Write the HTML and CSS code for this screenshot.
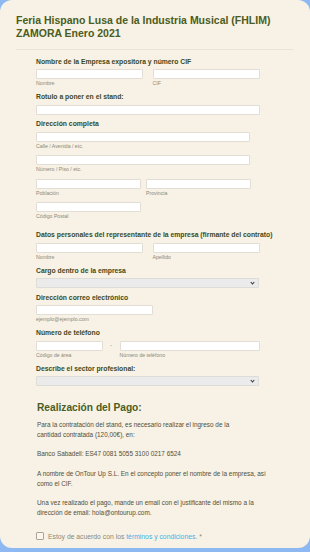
FILE: index.html
```html
<!DOCTYPE html>
<html lang="es">
<head>
    <meta charset="UTF-8">
    <meta name="viewport" content="width=device-width, initial-scale=1.0">
    <title>Feria Hispano Lusa de la Industria Musical</title>
    <link rel="stylesheet" href="styles.css">
</head>
<body>

<div class="card">
    <h1>Feria Hispano Lusa de la Industria Musical (FHLIM) ZAMORA Enero 2021</h1>
    <hr class="divider">

    <div class="form">
        <div class="field">
            <label>Nombre de la Empresa expositora y número CIF</label>
            <div class="row">
                <div class="sub"><input type="text" class="half"><span>Nombre</span></div>
                <div class="sub"><input type="text" class="half"><span>CIF</span></div>
            </div>
        </div>

        <div class="field">
            <label>Rotulo a poner en el stand:</label>
            <input type="text" class="full">
        </div>

        <div class="field">
            <label>Dirección completa</label>
            <div class="sub"><input type="text" class="addr"><span>Calle / Avenida / etc.</span></div>
            <div class="sub"><input type="text" class="addr"><span>Número / Piso / etc.</span></div>
            <div class="row tight">
                <div class="sub"><input type="text" class="quarter"><span>Población</span></div>
                <div class="sub"><input type="text" class="quarter"><span>Provincia</span></div>
            </div>
            <div class="sub"><input type="text" class="quarter"><span>Código Postal</span></div>
        </div>

        <div class="field spaced">
            <label>Datos personales del representante de la empresa (firmante del contrato)</label>
            <div class="row">
                <div class="sub"><input type="text" class="half"><span>Nombre</span></div>
                <div class="sub"><input type="text" class="half"><span>Apellido</span></div>
            </div>
        </div>

        <div class="field">
            <label>Cargo dentro de la empresa</label>
            <div class="select"><select><option></option></select></div>
        </div>

        <div class="field">
            <label>Dirección correo electrónico</label>
            <div class="sub"><input type="text" class="email"><span>ejemplo@ejemplo.com</span></div>
        </div>

        <div class="field">
            <label>Número de teléfono</label>
            <div class="row phone">
                <div class="sub"><input type="text" class="area"><span>Código de área</span></div>
                <div class="dash">-</div>
                <div class="sub"><input type="text" class="number"><span>Número de teléfono</span></div>
            </div>
        </div>

        <div class="field">
            <label>Describe el sector profesional:</label>
            <div class="select"><select><option></option></select></div>
        </div>
    </div>

    <div class="payment">
        <h2>Realización del Pago:</h2>
        <p>Para la contratación del stand, es necesario realizar el ingreso de la<br>cantidad contratada (120,00€), en:</p>
        <p>Banco Sabadell: ES47 0081 5055 3100 0217 6524</p>
        <p>A nombre de OnTour Up S.L. En el concepto poner el nombre de la empresa, así como el CIF.</p>
        <p>Una vez realizado el pago, mande un email con el justificante del mismo a la dirección de email: hola@ontourup.com.</p>
    </div>

    <div class="terms">
        <span class="box"></span>
        <span>Estoy de acuerdo con los <a href="#">términos y condiciones</a>. *</span>
    </div>
</div>

</body>
</html>
```

FILE: styles.css
```css
body {
    margin: 0;
    background: #8db8f2;
    font-family: "Liberation Sans", Arial, sans-serif;
}
.card {
    width: 310px;
    height: 548px;
    box-sizing: border-box;
    background: #f8f1e5;
    border-radius: 12px;
    padding: 13.5px 16px 0;
    overflow: hidden;
}
h1 {
    margin: 0;
    font-size: 10.5px;
    line-height: 13px;
    color: #4a5d22;
    width: 260px;
}
.divider {
    border: none;
    border-top: 1px solid #ebe3d4;
    margin: 9.5px 0 0;
}
.form {
    padding: 6.5px 0 0 20px;
}
.field {
    display: flex;
    flex-direction: column;
    margin-bottom: 4.5px;
}
.field.spaced {
    margin-top: 9.5px;
}
label {
    font-size: 6.8px;
    font-weight: bold;
    color: #3c4a1c;
    line-height: 9px;
    margin-bottom: 3.5px;
}
input, select {
    box-sizing: border-box;
    height: 10px;
    border: 1px solid #e2ded5;
    background: #fff;
    border-radius: 1px;
    margin: 0;
    padding: 0;
    display: block;
}
.full { width: 224px; }
.half { width: 107px; }
.addr { width: 214px; }
.quarter { width: 105px; }
.email { width: 117px; }
.area { width: 67px; }
.number { width: 140px; }
.select {
    position: relative;
    width: 223px;
}
.select select {
    width: 100%;
    appearance: none;
    background: #ebebeb;
    border-color: #dcdcd8;
}
.select::after {
    content: "";
    position: absolute;
    right: 5px;
    top: 2.5px;
    width: 2px;
    height: 2px;
    border-right: 1.2px solid #333;
    border-bottom: 1.2px solid #333;
    transform: rotate(45deg);
}
.row {
    display: flex;
    gap: 9.5px;
}
.row.tight { gap: 5px; }
.row.phone { gap: 0; }
.dash {
    width: 16.5px;
    text-align: center;
    font-size: 6px;
    color: #888;
    line-height: 8px;
}
.sub {
    margin-bottom: 5.5px;
}
.field > .sub:last-child,
.field > .row:last-child .sub {
    margin-bottom: 0.5px;
}
.sub span {
    display: block;
    font-size: 5.2px;
    color: #8b8a78;
    line-height: 7px;
    margin-top: 1px;
}
.payment {
    padding: 10px 0 0 21px;
}
h2 {
    margin: 0 0 5px;
    font-size: 10.2px;
    line-height: 14px;
    color: #4a5d22;
}
.payment p {
    margin: 0 0 9.5px;
    font-size: 6.4px;
    line-height: 10px;
    color: #4f503a;
    width: 236px;
}
.terms {
    display: flex;
    align-items: center;
    gap: 4px;
    padding: 4.5px 0 0 20px;
    font-size: 6.8px;
    color: #8b8a78;
}
.box {
    width: 6px;
    height: 6px;
    border: 1px solid #a9a69c;
    border-radius: 1px;
    background: #faf6ee;
}
.terms a {
    color: #3cb4e8;
    text-decoration: none;
}
```
